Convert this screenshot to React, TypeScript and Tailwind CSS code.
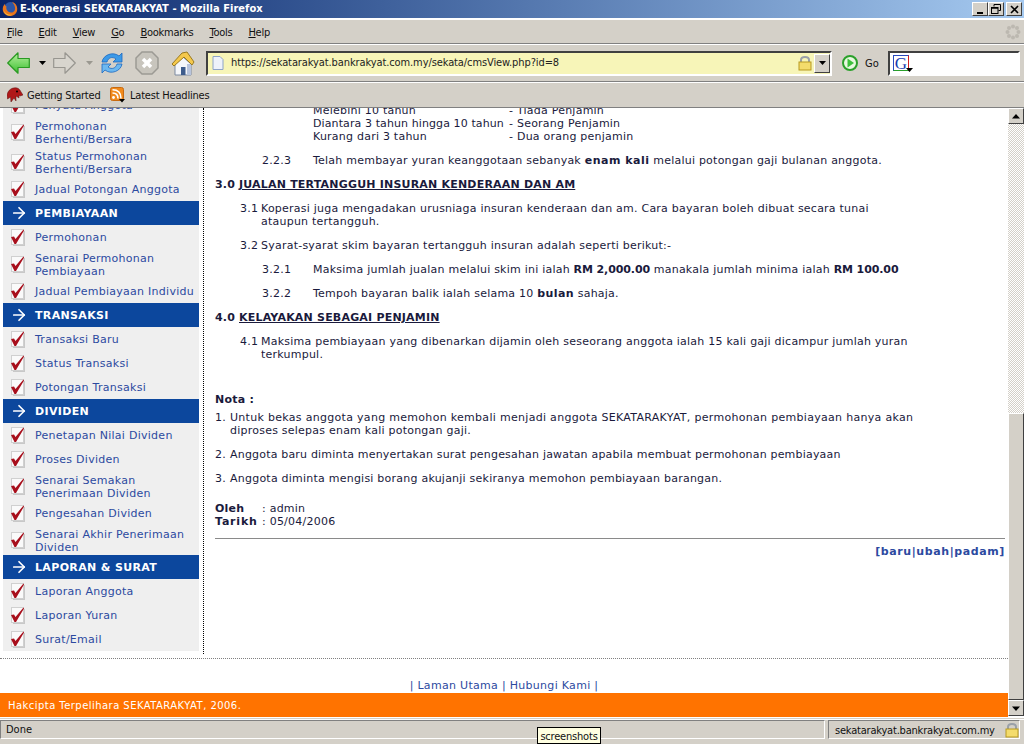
import { ArrowRight } from "lucide-react";
import type { ReactNode } from "react";

type MenuRow = { label: ReactNode; tall?: boolean };
type MenuGroup = { title?: string; items: MenuRow[] };

const menuGroups: MenuGroup[] = [
  {
    items: [
      { label: "Penyata Anggota" },
      { label: <>Permohonan<br />Berhenti/Bersara</>, tall: true },
      { label: <>Status Permohonan<br />Berhenti/Bersara</>, tall: true },
      { label: "Jadual Potongan Anggota" },
    ],
  },
  {
    title: "PEMBIAYAAN",
    items: [
      { label: "Permohonan" },
      { label: <>Senarai Permohonan<br />Pembiayaan</>, tall: true },
      { label: "Jadual Pembiayaan Individu" },
    ],
  },
  {
    title: "TRANSAKSI",
    items: [{ label: "Transaksi Baru" }, { label: "Status Transaksi" }, { label: "Potongan Transaksi" }],
  },
  {
    title: "DIVIDEN",
    items: [
      { label: "Penetapan Nilai Dividen" },
      { label: "Proses Dividen" },
      { label: <>Senarai Semakan<br />Penerimaan Dividen</>, tall: true },
      { label: "Pengesahan Dividen" },
      { label: <>Senarai Akhir Penerimaan<br />Dividen</>, tall: true },
    ],
  },
  {
    title: "LAPORAN & SURAT",
    items: [{ label: "Laporan Anggota" }, { label: "Laporan Yuran" }, { label: "Surat/Email" }],
  },
];

const CheckIcon = () => (
  <svg width="16" height="18" viewBox="0 0 16 18" className="shrink-0">
    <rect x="4" y="3" width="12" height="15" fill="#a8a8a8" opacity="0.55" />
    <rect x="2.5" y="1.5" width="12" height="15" fill="#fafafa" stroke="#d0d0d0" />
    <path d="M2 9 L5 8.5 L6.5 11 L14.5 1.5 L15 2.5 L7 16 L5.5 16 Z" fill="#a80f1c" />
  </svg>
);

const MenuHeader = ({ title }: { title: string }) => (
  <div className="flex h-6 items-center bg-[#0c479d] font-bold tracking-[0.35px] text-white">
    <ArrowRight className="ml-[7px] mr-[7px] h-[18px] w-[18px]" strokeWidth={2.25} />
    <span>{title}</span>
  </div>
);

const Sidebar = () => (
  <div className="-mt-[15px] w-[196px] shrink-0 bg-[#efefef] text-[11px] leading-[13px] tracking-[0.27px] text-[#2c4aa0]">
    {menuGroups.map((group, i) => (
      <div key={i}>
        {group.title && <MenuHeader title={group.title} />}
        {group.items.map((item, j) => (
          <div key={j} className={`flex items-center pl-[6px] ${item.tall ? "h-[30px]" : "h-6"}`}>
            <CheckIcon />
            <span className={`ml-[10px] ${item.tall ? "pt-[2px]" : ""}`}>{item.label}</span>
          </div>
        ))}
      </div>
    ))}
  </div>
);

const Row = ({ num, children }: { num: string; children: ReactNode }) => (
  <div className="mb-[11px] ml-[47px] flex">
    <span className="w-[51px] shrink-0">{num}</span>
    <div>{children}</div>
  </div>
);

const Numbered = ({ num, children }: { num: string; children: ReactNode }) => (
  <div className="mb-[11px] ml-[25px] flex">
    <span className="w-[21px] shrink-0">{num}</span>
    <div>{children}</div>
  </div>
);

const Heading = ({ num, children }: { num: string; children: ReactNode }) => (
  <div className="mb-[11px] flex font-bold tracking-[0.2px]">
    <span className="w-[24px] shrink-0">{num}</span>
    <span className="underline">{children}</span>
  </div>
);

const Note = ({ num, children }: { num: string; children: ReactNode }) => (
  <div className="mb-[11px] flex">
    <span className="w-[15px] shrink-0">{num}</span>
    <div>{children}</div>
  </div>
);

const Article = () => (
  <div className="-mt-[4px] min-w-0 flex-1 pl-[11px] pr-[3px] text-[11px] leading-[13px] tracking-[0.23px] text-[#1a1a3c]">
    <div className="mb-[11px] ml-[98px] grid grid-cols-[196px_1fr] whitespace-nowrap">
      <span>Melebihi 10 tahun</span>
      <span>- Tiada Penjamin</span>
      <span className="tracking-[0.1px]">Diantara 3 tahun hingga 10 tahun</span>
      <span>- Seorang Penjamin</span>
      <span>Kurang dari 3 tahun</span>
      <span>- Dua orang penjamin</span>
    </div>
    <Row num="2.2.3">
      Telah membayar yuran keanggotaan sebanyak <b className="tracking-[0.5px]">enam kali</b> melalui potongan gaji bulanan anggota.
    </Row>
    <Heading num="3.0">JUALAN TERTANGGUH INSURAN KENDERAAN DAN AM</Heading>
    <Numbered num="3.1">
      Koperasi juga mengadakan urusniaga insuran kenderaan dan am. Cara bayaran boleh dibuat secara tunai
      <br />
      ataupun tertangguh.
    </Numbered>
    <Numbered num="3.2">Syarat-syarat skim bayaran tertangguh insuran adalah seperti berikut:-</Numbered>
    <Row num="3.2.1">
      Maksima jumlah jualan melalui skim ini ialah <b className="tracking-[-0.1px]">RM 2,000.00</b> manakala jumlah minima ialah <b className="tracking-[-0.1px]">RM 100.00</b>
    </Row>
    <Row num="3.2.2">
      Tempoh bayaran balik ialah selama 10 <b className="tracking-[0.4px]">bulan</b> sahaja.
    </Row>
    <Heading num="4.0">KELAYAKAN SEBAGAI PENJAMIN</Heading>
    <Numbered num="4.1">
      Maksima pembiayaan yang dibenarkan dijamin oleh seseorang anggota ialah 15 kali gaji dicampur jumlah yuran
      <br />
      terkumpul.
    </Numbered>
    <div className="mb-[5px] mt-[32px] font-bold">Nota :</div>
    <Note num="1.">
      <span className="tracking-[0.3px]">Untuk bekas anggota yang memohon kembali menjadi anggota SEKATARAKYAT, permohonan pembiayaan hanya akan</span>
      <br />
      diproses selepas enam kali potongan gaji.
    </Note>
    <Note num="2.">
      <span className="tracking-[0.19px]">Anggota baru diminta menyertakan surat pengesahan jawatan apabila membuat permohonan pembiayaan</span>
    </Note>
    <Note num="3.">Anggota diminta mengisi borang akujanji sekiranya memohon pembiayaan barangan.</Note>
    <div className="mt-[17px] grid grid-cols-[47px_1fr]">
      <b>Oleh</b>
      <span>: admin</span>
      <b className="tracking-[0.8px]">Tarikh</b>
      <span>: 05/04/2006</span>
    </div>
    <div className="mt-[10px] border-t border-[#8a8a8a] pt-[6px] text-right font-bold tracking-[0.6px] text-[#2c4aa0]">
      [baru|ubah|padam]
    </div>
  </div>
);

const Scrollbar = () => (
  <div className="flex w-4 shrink-0 flex-col bg-[repeating-conic-gradient(#d4d0c8_0_25%,#ffffff_0_50%)] bg-[length:2px_2px]">
    <div className="flex h-4 items-center justify-center border border-b-[#404040] border-l-white border-r-[#404040] border-t-white bg-[#d4d0c8]">
      <svg width="8" height="5" viewBox="0 0 8 5"><path d="M4 0 L8 4.5 H0 Z" fill="#000" /></svg>
    </div>
    <div className="flex-1" />
    <div className="h-[287px] border border-b-[#404040] border-l-white border-r-[#404040] border-t-white bg-[#d4d0c8]" />
    <div className="flex h-4 items-center justify-center border border-b-[#404040] border-l-white border-r-[#404040] border-t-white bg-[#d4d0c8]">
      <svg width="8" height="5" viewBox="0 0 8 5"><path d="M4 5 L8 0.5 H0 Z" fill="#000" /></svg>
    </div>
  </div>
);

const WinButton = ({ children }: { children: ReactNode }) => (
  <div className="flex h-[14px] w-[16px] items-center justify-center border border-b-[#404040] border-l-white border-r-[#404040] border-t-white bg-[#d4d0c8]">
    {children}
  </div>
);

const TitleBar = () => (
  <div className="flex h-[18px] shrink-0 items-center bg-gradient-to-r from-[#0a246a] to-[#a6caf0] pr-[2px]">
    <svg width="16" height="16" viewBox="0 0 16 16" className="ml-[2px] shrink-0">
      <circle cx="8.5" cy="7.5" r="6.5" fill="#2c56a8" />
      <path d="M10 1 C14 2 16 6 15 10 C14 14 9 16 5 14.5 C2 13 0 10 1 6 C1.5 4.5 2.2 3.5 3 3 C3 4.5 3.5 5 4.5 5.5 C3.8 7.5 5 11 9 11.5 C12 11.8 13.5 9 13 6.5 C12.6 4 11.5 2.5 10 1 Z" fill="#e8741c" />
      <path d="M1.5 9 C3 13 7 14.5 10.5 13.5 C8 15.5 3 15 1.5 9 Z" fill="#f6c43c" />
    </svg>
    <span className="ml-[2px] flex-1 pt-[1px] text-[11px] font-bold tracking-[0.05px] text-white">E-Koperasi SEKATARAKYAT - Mozilla Firefox</span>
    <div className="flex">
      <WinButton>
        <span className="mt-[7px] h-[2px] w-[6px] bg-black" />
      </WinButton>
      <WinButton>
        <svg width="10" height="10" viewBox="0 0 10 10" fill="none" stroke="#000">
          <path d="M3 2.5 V0.5 H9.5 V6.5 H7.5" strokeWidth="1" />
          <rect x="0.5" y="3.5" width="6.5" height="6" />
          <path d="M0.5 4 H7" strokeWidth="1.5" />
        </svg>
      </WinButton>
      <div className="ml-[2px]">
        <WinButton>
          <svg width="9" height="9" viewBox="0 0 9 9"><path d="M1 1 L8 8 M8 1 L1 8" stroke="#000" strokeWidth="1.6" /></svg>
        </WinButton>
      </div>
    </div>
  </div>
);

const MenuBar = () => (
  <div className="flex h-[26px] shrink-0 items-center border-b border-b-[#808080] border-t-2 border-t-white pl-[7px] pr-[3px] text-[11px] tracking-[-0.25px] text-[#111]">
    <div className="flex flex-1 gap-[16px] pt-[3px]">
      {["File", "Edit", "View", "Go", "Bookmarks", "Tools", "Help"].map((m) => (
        <span key={m}>
          <span className="underline">{m[0]}</span>
          {m.slice(1)}
        </span>
      ))}
    </div>
    <svg width="16" height="16" viewBox="0 0 16 16" fill="#bcb8b0">
      <circle cx="8" cy="2.5" r="2" />
      <circle cx="12" cy="4" r="2" />
      <circle cx="13.5" cy="8" r="2" />
      <circle cx="12" cy="12" r="2" />
      <circle cx="8" cy="13.5" r="2" />
      <circle cx="4" cy="12" r="2" />
      <circle cx="2.5" cy="8" r="2" />
      <circle cx="4" cy="4" r="2" />
    </svg>
  </div>
);

const LockIcon = () => (
  <svg width="14" height="16" viewBox="0 0 14 16" className="shrink-0">
    <path d="M3 8 V5 C3 1 11 1 11 5 V8" fill="none" stroke="#9aa0a8" strokeWidth="2" />
    <rect x="1" y="7" width="12" height="8" fill="#f4dc6c" stroke="#b89a20" />
  </svg>
);

const DropCaret = ({ color = "#000" }: { color?: string }) => (
  <svg width="7" height="4" viewBox="0 0 7 4"><path d="M0 0 H7 L3.5 4 Z" fill={color} /></svg>
);

const Toolbar = () => (
  <div className="flex h-[38px] shrink-0 items-center border-b border-b-[#808080] border-t border-t-white pl-[7px] text-[11px] text-[#111]">
    <svg width="23" height="22" viewBox="0 0 23 22">
      <defs>
        <linearGradient id="backFill" x1="0" y1="0" x2="0" y2="1">
          <stop offset="0" stopColor="#b8f0a0" />
          <stop offset="1" stopColor="#3cc030" />
        </linearGradient>
      </defs>
      <path d="M0.7 11 L11 0.8 V6.5 H22.3 V15.5 H11 V21.2 Z" fill="url(#backFill)" stroke="#2a9a22" strokeWidth="1.2" strokeLinejoin="round" />
    </svg>
    <div className="ml-[9px]"><DropCaret /></div>
    <svg width="23" height="22" viewBox="0 0 23 22" className="ml-[7px]">
      <path d="M22.3 11 L12 0.8 V6.5 H0.7 V15.5 H12 V21.2 Z" fill="#d8d5ce" stroke="#989690" strokeWidth="1.2" strokeLinejoin="round" />
    </svg>
    <div className="ml-[10px]"><DropCaret color="#9a9890" /></div>
    <svg width="24" height="24" viewBox="0 0 24 24" className="ml-[7px]">
      <path d="M2 11 C3 4 13 0 19 5 L22 2 V11 H13 L16 8 C12 5 8 7 7 11 Z" fill="#3c9ae8" stroke="#1c68c0" strokeWidth="0.8" />
      <path d="M22 13 C21 20 11 24 5 19 L2 22 V13 H11 L8 16 C12 19 16 17 17 13 Z" fill="#6cb8f0" stroke="#1c68c0" strokeWidth="0.8" />
    </svg>
    <svg width="24" height="24" viewBox="0 0 24 24" className="ml-[11px]">
      <path d="M7 1 H17 L23 7 V17 L17 23 H7 L1 17 V7 Z" fill="#c8c5bd" stroke="#9c9a94" strokeWidth="1.5" />
      <path d="M8 8 L16 16 M16 8 L8 16" stroke="#fff" strokeWidth="3.5" />
    </svg>
    <svg width="24" height="25" viewBox="0 0 24 25" className="ml-[12px]">
      <path d="M4 13 L12 6 L20 13 V24 H4 Z" fill="#f4f6fa" stroke="#7c8aa0" />
      <path d="M10 16 H14.5 V24 H10 Z" fill="#3e5c8c" />
      <path d="M16 13 L20 13 V24 H16 Z" fill="#b8c4dc" />
      <path d="M1 13 L11 2 L16 1 L23 11 L21 14 L13 6 L3 15 Z" fill="#f4c84c" stroke="#9a7a20" strokeLinejoin="round" />
    </svg>
    <div className="ml-[11px] flex h-[25px] w-[626px] shrink-0 items-center border-2 border-b-white border-l-[#404040] border-r-white border-t-[#404040] bg-[#f7f5b8] pl-[4px]">
      <svg width="12" height="14" viewBox="0 0 12 14" className="shrink-0">
        <path d="M1 0.5 H8 L11 3.5 V13.5 H1 Z" fill="#eef2fa" stroke="#8ea4c8" />
      </svg>
      <span className="ml-[7px] flex-1 pt-[1px] tracking-[-0.1px] text-[#222]">https://sekatarakyat.bankrakyat.com.my/sekata/cmsView.php?id=8</span>
      <LockIcon />
      <div className="ml-[2px] flex h-[19px] w-4 items-center justify-center border border-b-[#404040] border-l-white border-r-[#404040] border-t-white bg-[#d4d0c8]">
        <DropCaret />
      </div>
    </div>
    <svg width="16" height="16" viewBox="0 0 16 16" className="ml-[10px] shrink-0">
      <circle cx="8" cy="8" r="7" fill="#e8f8e0" stroke="#2aa02a" strokeWidth="2" />
      <path d="M5.5 3.5 L12 8 L5.5 12.5 Z" fill="#3cc03c" />
    </svg>
    <span className="ml-[7px] w-[23px] shrink-0 pt-[2px]">Go</span>
    <div className="flex h-[25px] w-[132px] shrink-0 items-center border-2 border-b-white border-l-[#404040] border-r-white border-t-[#404040] bg-white pl-[3px]">
      <div className="relative flex h-[16px] w-[16px] items-center justify-center border border-b-[#2aa02a] border-l-[#2a4ac0] border-r-[#d02020] border-t-[#2a4ac0] font-['Liberation_Serif',serif] text-[17px] leading-none text-[#1a3cb0]">
        G
        <span className="absolute -bottom-[2px] -right-[5px] flex"><DropCaret /></span>
      </div>
    </div>
  </div>
);

const BookmarksBar = () => (
  <div className="flex h-[26px] shrink-0 items-center border-b border-b-[#808080] border-t border-t-white pl-[7px] text-[11px] tracking-[-0.2px] text-[#111]">
    <svg width="16" height="16" viewBox="0 0 16 16" className="shrink-0">
      <path d="M0 8 C1 3 5 0 10 1 C12 1.5 13 3 14 5 L16 8 L13 9 L12 8 L12 11 L9 9 L9 14 L7 11 L4 15 L3.5 10 L0.5 12 Z" fill="#b01818" stroke="#5a1010" strokeWidth="0.5" />
      <circle cx="10" cy="4.5" r="1" fill="#000" />
    </svg>
    <span className="ml-[4px] w-[76px] shrink-0 whitespace-nowrap pt-[3px]">Getting Started</span>
    <svg width="16" height="16" viewBox="0 0 16 16" className="ml-[7px] shrink-0">
      <rect x="0.5" y="0.5" width="13" height="13" rx="2" fill="#f08a1c" stroke="#c86a10" />
      <circle cx="3.5" cy="10.5" r="1.4" fill="#fff" />
      <path d="M2.5 6 C6 6 8 8 8 11.5 M2.5 2.8 C8 2.8 11 6 11 11.5" stroke="#fff" strokeWidth="1.6" fill="none" />
      <path d="M9 12 H15 L12 15.5 Z" fill="#000" />
    </svg>
    <span className="ml-[4px] whitespace-nowrap pt-[3px]">Latest Headlines</span>
  </div>
);

const StatusBar = () => (
  <div className="relative mt-[1px] flex h-[25px] shrink-0 gap-[3px] border-t border-t-white pr-[4px] text-[11px] text-[#111]">
    <div className="mb-[5px] flex flex-1 items-center border border-b-white border-l-[#808080] border-r-white border-t-[#808080] pl-[5px] pt-[2px]">Done</div>
    <div className="mb-[5px] flex w-[192px] items-center border border-b-white border-l-[#808080] border-r-white border-t-[#808080] pl-[6px]">
      <span className="flex-1 whitespace-nowrap pt-[3px] tracking-[-0.2px]">sekatarakyat.bankrakyat.com.my</span>
      <LockIcon />
    </div>
    <div className="absolute left-[537px] top-[7px] flex h-[17px] w-[64px] items-center justify-center border border-black bg-[#ffffe1] pt-[3px] tracking-[-0.2px] text-[#111]">screenshots</div>
  </div>
);

export default function App() {
  return (
    <div className="flex h-[744px] w-[1024px] flex-col overflow-hidden bg-[#d4d0c8] font-['DejaVu_Sans_Condensed','Noto_Sans',sans-serif]">
      <TitleBar />
      <MenuBar />
      <Toolbar />
      <BookmarksBar />
      <div className="flex h-[610px] shrink-0 border-b-2 border-white bg-white font-['DejaVu_Sans',sans-serif]">
        <div className="flex min-w-0 flex-1 flex-col">
          <div className="flex h-[551px] shrink-0 overflow-hidden border-b border-dotted border-[#808080] pl-[3px]">
            <div className="h-[543px] shrink-0 overflow-hidden">
              <Sidebar />
            </div>
            <div className="ml-[4px] h-[546px] shrink-0 border-l border-dotted border-black" />
            <Article />
          </div>
          <div className="flex h-[34px] shrink-0 items-end justify-center pb-[1px] text-[11px] leading-[13px] tracking-[0.3px] text-[#2c4aa0]">
            | Laman Utama | Hubungi Kami |
          </div>
          <div className="flex h-[24px] shrink-0 items-center bg-[#ff7300] pl-[8px] text-[10px] tracking-[0.45px] text-white">
            Hakcipta Terpelihara SEKATARAKYAT, 2006.
          </div>
        </div>
        <Scrollbar />
      </div>
      <StatusBar />
    </div>
  );
}
